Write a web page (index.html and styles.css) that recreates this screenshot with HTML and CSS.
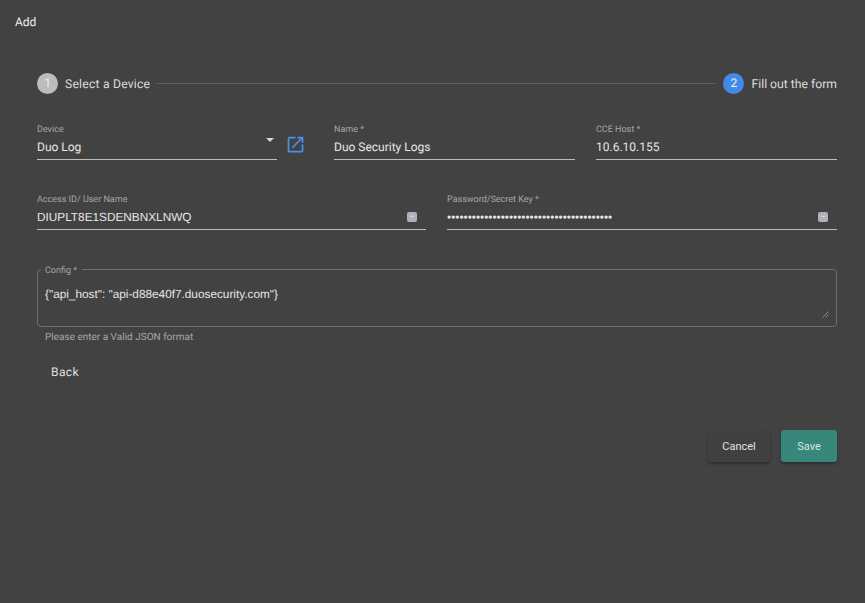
FILE: index.html
```html
<!DOCTYPE html>
<html lang="en">
<head>
<meta charset="utf-8">
<title>Add</title>
<link rel="stylesheet" href="styles.css">
</head>
<body>
<main class="dialog">
  <h1 class="title">Add</h1>
  <div class="content">
    <div class="stepper">
      <span class="step-num done">1</span>
      <span class="step-label step-label-first">Select a Device</span>
      <span class="step-line"></span>
      <span class="step-num active">2</span>
      <span class="step-label">Fill out the form</span>
    </div>
    <div class="row row-one">
      <div class="device-col">
        <div class="field">
          <label class="field-label">Device</label>
          <div class="field-value">Duo Log<span class="caret"></span></div>
        </div>
        <svg class="open-icon" width="21" height="21" viewBox="0 0 24 24" aria-hidden="true"><path fill="#4a90e8" d="M19 19H5V5h7V3H5a2 2 0 0 0-2 2v14a2 2 0 0 0 2 2h14c1.1 0 2-.9 2-2v-7h-2v7zM14 3v2h3.59l-9.83 9.83 1.41 1.41L19 6.41V10h2V3h-7z"/></svg>
      </div>
      <div class="field">
        <label class="field-label">Name *</label>
        <div class="field-value">Duo Security Logs</div>
      </div>
      <div class="field">
        <label class="field-label">CCE Host *</label>
        <div class="field-value">10.6.10.155</div>
      </div>
    </div>
    <div class="row row-two">
      <div class="field">
        <label class="field-label">Access ID/ User Name</label>
        <div class="field-value field-input">DIUPLT8E1SDENBNXLNWQ<span class="key-badge"><span class="key-dots">•••</span></span></div>
      </div>
      <div class="field">
        <label class="field-label">Password/Secret Key *</label>
        <div class="field-value field-input">••••••••••••••••••••••••••••••••••••••••<span class="key-badge"><span class="key-dots">•••</span></span></div>
      </div>
    </div>
    <fieldset class="config">
      <legend class="config-legend">Config *</legend>
      <div class="config-text">{"api_host": "api-d88e40f7.duosecurity.com"}</div>
      <svg class="resize-grip" width="7" height="7" viewBox="0 0 7 7" aria-hidden="true"><path d="M.5 6.5l6-6M3.5 6.5l3-3" stroke="#858585" stroke-width="1" fill="none"/></svg>
    </fieldset>
    <p class="helper">Please enter a Valid JSON format</p>
    <div class="back-row"><span class="back">Back</span></div>
    <div class="actions">
      <button class="btn cancel" type="button">Cancel</button>
      <button class="btn save" type="button">Save</button>
    </div>
  </div>
</main>
</body>
</html>
```
FILE: styles.css
```css
* { box-sizing: border-box; }
html, body { height: 100%; }
body {
  margin: 0;
  background: #424242;
  color: #fff;
  font-family: Roboto, "Liberation Sans", sans-serif;
  text-rendering: geometricPrecision;
  overflow: hidden;
}
.dialog { padding: 14px 28px 0 15px; }
.title {
  margin: 0;
  font-size: 12px;
  line-height: 16px;
  font-weight: 400;
  color: #ededed;
}
.content { padding: 42px 0 0 22px; }
.stepper {
  display: flex;
  align-items: center;
  height: 22px;
}
.step-num {
  width: 21px;
  height: 21px;
  border-radius: 50%;
  display: flex;
  align-items: center;
  justify-content: center;
  font-size: 12px;
  color: #f0f0f0;
  flex: none;
}
.step-num.done { background: #bdbdbd; }
.step-num.active { background: #4389e8; }
.step-label {
  margin-left: 7px;
  padding-top: 2px;
  font-size: 12.2px;
  color: #dcdcdc;
  white-space: nowrap;
}
.step-label-first { letter-spacing: .2px; }
.step-line {
  flex: 1;
  height: 1px;
  background: #5f5f5f;
  margin: 0 7px;
}
.row { display: flex; gap: 21px; }
.row-one { margin-top: 31px; }
.row-two { margin-top: 35px; }
.row-one > .field { flex: 0 0 241px; }
.row-two > .field { flex: 1 1 0; }
.row-two > .field:first-child { flex: 0 0 389px; }
.device-col {
  flex: 0 0 276px;
  display: flex;
  align-items: flex-start;
}
.device-col .field { flex: 0 0 240px; }
.open-icon { margin: 9px 0 0 8px; flex: none; }
.field { height: 35px; border-bottom: 1px solid #bdbdbd; }
.field-label {
  display: block;
  font-size: 9px;
  line-height: 11px;
  color: #a6a6a6;
}
.field-value {
  position: relative;
  margin-top: 1px;
  font-size: 12px;
  line-height: 20px;
  color: #e6e6e6;
  white-space: nowrap;
}
.field-input { font-family: "Liberation Sans", sans-serif; font-size: 11.8px; }
.caret {
  position: absolute;
  right: 3px;
  top: 1px;
  border-left: 4px solid transparent;
  border-right: 4px solid transparent;
  border-top: 4px solid #d8d8d8;
}
.key-badge {
  position: absolute;
  right: 9px;
  top: 5px;
  width: 10px;
  height: 10px;
  border-radius: 2px;
  background: #aeb1bc;
  display: flex;
  align-items: center;
  justify-content: center;
  overflow: hidden;
}
.key-dots { font: 5px/10px "Liberation Sans", sans-serif; color: #e2e3e8; letter-spacing: -.6px; }
.config {
  position: relative;
  margin: 34px 0 0;
  padding: 0 7px;
  height: 63px;
  border: 1px solid #6f6f6f;
  border-radius: 4px;
}
.config-legend {
  position: relative;
  top: 2px;
  padding: 0 5px 0 4px;
  margin-left: -4px;
  font-size: 9px;
  line-height: 11px;
  color: #a6a6a6;
}
.config-text {
  margin-top: 10px;
  font-family: "Liberation Sans", sans-serif;
  font-size: 11.8px;
  line-height: 18px;
  color: #e6e6e6;
}
.resize-grip { position: absolute; right: 7px; bottom: 8px; }
.helper {
  margin: 5px 0 0 8px;
  font-size: 10px;
  line-height: 12px;
  color: #a8a8a8;
}
.back-row { margin-top: 17px; padding-left: 14px; }
.back { font-size: 12px; line-height: 16px; color: #dedede; letter-spacing: .4px; }
.actions {
  display: flex;
  justify-content: flex-end;
  gap: 11px;
  margin-top: 50px;
}
.btn {
  height: 32px;
  border: 0;
  border-radius: 3px;
  font-family: Roboto, "Liberation Sans", sans-serif;
  font-size: 11px;
  box-shadow: 0 2px 3px rgba(0,0,0,.3);
}
.cancel { width: 62px; background: #404040; color: #e0e0e0; }
.save { width: 56px; background: #37877a; color: #d3e8e3; }
```
